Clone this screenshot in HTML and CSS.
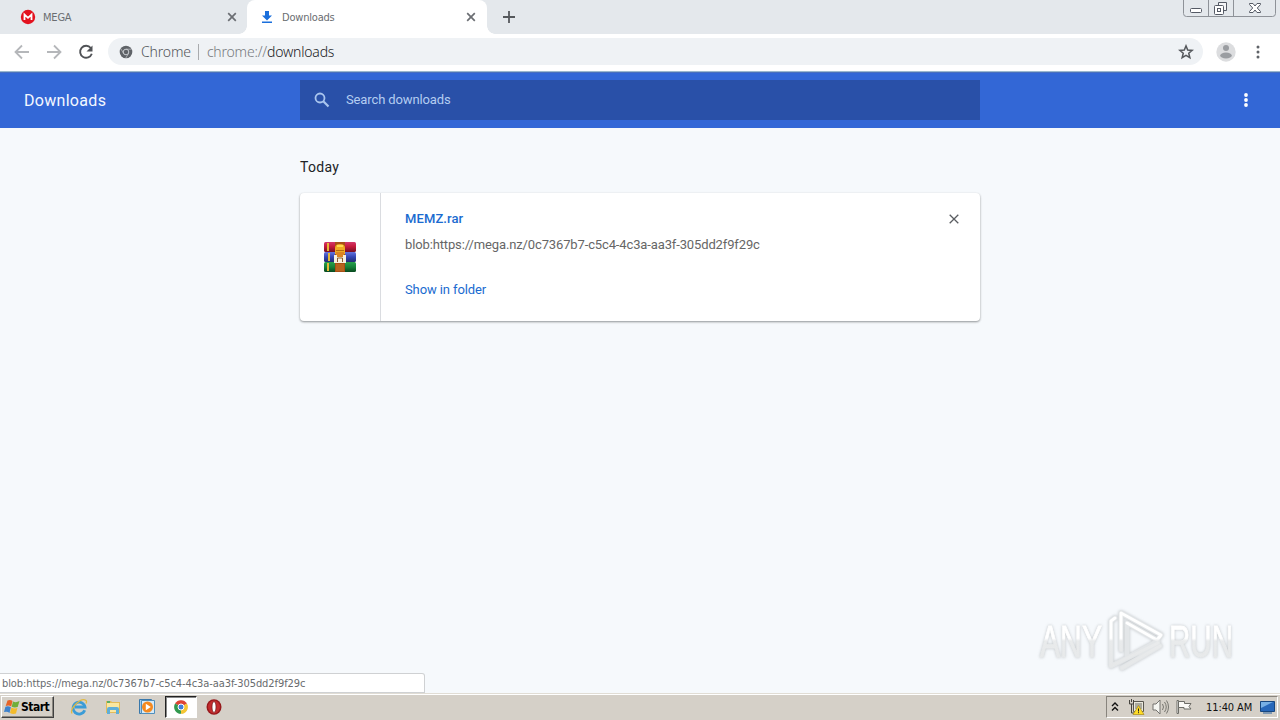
FILE: index.html
```html
<!DOCTYPE html>
<html lang="en">
<head>
<meta charset="utf-8">
<title>Downloads</title>
<link rel="stylesheet" href="styles.css">
</head>
<body>
<div class="screen">
  <div class="tabstrip">
    <div class="tab tab-mega">
      <svg class="favicon" viewBox="0 0 16 16" width="16" height="16"><circle cx="8" cy="8" r="7.2" fill="#e3121f"/><path d="M4.500 11V5.500L8 8.800l3.500-3.300V11" fill="none" stroke="#fff" stroke-width="1.8"/></svg>
      <span class="tab-title t-mega">MEGA</span>
      <svg class="tab-close" viewBox="0 0 10 10" width="10" height="10"><path d="M1.200 1.200l7.600 7.600M8.800 1.200L1.200 8.800" stroke="#6b6e73" stroke-width="1.700"/></svg>
    </div>
    <div class="tab tab-active">
      <svg class="favicon" viewBox="0 0 16 16" width="16" height="16"><path d="M6 2h4v4.500h3L8 11.500 3 6.500h3zM3 12.500h10v1.600H3z" fill="#1a6fdc"/></svg>
      <span class="tab-title t-down">Downloads</span>
      <svg class="tab-close" viewBox="0 0 10 10" width="10" height="10"><path d="M1.200 1.200l7.600 7.600M8.800 1.200L1.200 8.800" stroke="#6b6e73" stroke-width="1.700"/></svg>
    </div>
    <svg class="new-tab" viewBox="0 0 12 12" width="12" height="12"><path d="M6 0v12M0 6h12" stroke="#55585c" stroke-width="1.800"/></svg>
    <svg class="window-controls" viewBox="0 0 94 18" width="94" height="18">
      <path d="M.5 0v13.500q0 3 3 3h86q3 0 3-3V0M25.500 0v16M50.500 0v16" fill="none" stroke="#8e9298"/>
      <rect x="7.500" y="8.500" width="11" height="4" rx="1" fill="#fff" stroke="#555a65"/>
      <path d="M35.500 5V2.500h8v8H41" fill="#f4f5f7" stroke="#555a65"/>
      <rect x="31.500" y="5.500" width="9" height="9" rx="1" fill="#fff" stroke="#555a65"/><rect x="34.500" y="8.500" width="3" height="3" fill="#fff" stroke="#555a65"/>
      <path d="M66.500 3.500h3.500l2 2.500 2-2.500h3.500v1l-3.200 3.500 3.200 3.500v1H74L72 10l-2 2.500h-3.500v-1L69.700 8l-3.200-3.500z" fill="#fff" stroke="#555a65"/>
    </svg>
  </div>
  <div class="toolbar">
    <svg class="nav-icon back" viewBox="0 0 16 16" width="16" height="16"><path d="M15 8H2M8 1.500L1.500 8 8 14.500" fill="none" stroke="#b5b7ba" stroke-width="1.800"/></svg>
    <svg class="nav-icon forward" viewBox="0 0 16 16" width="16" height="16"><path d="M1 8h13M8 1.500L14.500 8 8 14.500" fill="none" stroke="#b5b7ba" stroke-width="1.800"/></svg>
    <svg class="nav-icon reload" viewBox="0 0 16 16" width="16" height="16"><path d="M12.800 4A6 6 0 1 0 13.800 9.800" fill="none" stroke="#505256" stroke-width="1.900"/><path d="M14.500 1.500V7.500H8.500z" fill="#505256"/></svg>
    <div class="omnibox">
      <svg class="site-icon" viewBox="0 0 14 14" width="14" height="14"><circle cx="7" cy="7" r="6.300" fill="#5f6368"/><circle cx="7" cy="7" r="2.800" fill="#5f6368" stroke="#d5d8dc" stroke-width=".9"/><path d="M7 4.200h5.500M4.600 8.500L1.900 3.800M9.500 8.500L6.800 13" stroke="#c5c8cc" stroke-width=".7"/></svg>
      <span class="site-name">Chrome</span>
      <span class="divider"></span>
      <span class="url"><span class="scheme">chrome://</span>downloads</span>
      <svg class="star" viewBox="0 0 16 16" width="16" height="16"><path d="M8 1.900l1.700 4.200 4.500.3-3.450 2.900 1.100 4.400L8 11.300l-3.850 2.400 1.100-4.400L1.800 6.400l4.500-.3z" fill="none" stroke="#55585c" stroke-width="1.500"/></svg>
    </div>
    <svg class="avatar" viewBox="0 0 20 20" width="20" height="20"><circle cx="10" cy="10" r="9.700" fill="#dcdddf"/><circle cx="10" cy="6" r="3" fill="#9a9da1"/><ellipse cx="10" cy="13.500" rx="5.800" ry="3" fill="#9a9da1"/></svg>
    <svg class="kebab" viewBox="0 0 4 14" width="4" height="14"><g fill="#5f6368"><circle cx="2" cy="2" r="1.500"/><circle cx="2" cy="7" r="1.500"/><circle cx="2" cy="12" r="1.500"/></g></svg>
  </div>
  <div class="page-header">
    <h1 class="heading">Downloads</h1>
    <div class="search">
      <svg class="search-icon" viewBox="0 0 16 16" width="16" height="16"><circle cx="6" cy="6" r="4.500" fill="none" stroke="#a9c5ee" stroke-width="1.800"/><path d="M9.300 9.300l5.200 5.200" stroke="#a9c5ee" stroke-width="2.200"/></svg>
      <span class="placeholder">Search downloads</span>
    </div>
    <svg class="page-menu" viewBox="0 0 4 14" width="4" height="14"><g fill="#fff"><circle cx="2" cy="2" r="1.900"/><circle cx="2" cy="7" r="1.900"/><circle cx="2" cy="12" r="1.900"/></g></svg>
  </div>
  <div class="content">
    <div class="list">
      <h2 class="date">Today</h2>
      <div class="card">
        <div class="file-icon">
          <svg viewBox="0 0 32 32" width="32" height="32">
            <defs>
              <linearGradient id="red" x2="0" y2="1"><stop stop-color="#d3386a"/><stop offset=".45" stop-color="#c51a3d"/><stop offset="1" stop-color="#760e23"/></linearGradient>
              <linearGradient id="blue" x2="0" y2="1"><stop stop-color="#6574de"/><stop offset=".5" stop-color="#3446b4"/><stop offset="1" stop-color="#222b70"/></linearGradient>
              <linearGradient id="green" x2="0" y2="1"><stop stop-color="#28a04d"/><stop offset=".5" stop-color="#168239"/><stop offset="1" stop-color="#08481e"/></linearGradient>
            </defs>
            <rect y="1" width="32" height="10" rx="1.500" fill="url(#red)"/><rect y="11" width="32" height="10" rx="1.500" fill="url(#blue)"/><rect y="21" width="32" height="10" rx="1.500" fill="url(#green)"/>
            <path d="M3 2h2v8H3zm1 10h2v8H4zm-1 10h2v8H3z" fill="#e5b936"/>
            <path d="M11 1h10v30H11z" fill="#a74f16"/><path d="M12 23h8v7h-8z" fill="#b7641f"/>
            <path d="M11 7q0-4 5-4t5 4v6H11z" fill="#efaa22"/><path d="M13 4h6v2h-6z" fill="#ffd94c"/><path d="M12 9.500h8" stroke="#b36b12"/><path d="M12 11h8v4h-8z" fill="#dc8422"/>
            <path d="M10 14h12v8H10z" fill="#f7f1df"/><path d="M13 13h6v3h-6z" fill="#dc8422"/><path d="M13.500 21v-4h5v4" fill="none" stroke="#8a5b2b"/>
          </svg>
        </div>
        <div class="details">
          <div class="title-row">
            <span class="file-name">MEMZ.rar</span>
            <svg class="remove" viewBox="0 0 10 10" width="10" height="10"><path d="M.7.700l8.600 8.600M9.300.700L.7 9.300" stroke="#5a5d61" stroke-width="1.300"/></svg>
          </div>
          <div class="file-url">blob:https://mega.nz/0c7367b7-c5c4-4c3a-aa3f-305dd2f9f29c</div>
          <div class="show">Show in folder</div>
        </div>
      </div>
    </div>
    <svg class="watermark" viewBox="0 0 204 70" width="204" height="70">
      <defs><linearGradient id="fade" gradientUnits="userSpaceOnUse" x1="0" y1="0" x2="0" y2="70"><stop offset=".46" stop-color="#fff"/><stop offset=".5" stop-color="#e9ebec"/><stop offset="1" stop-color="#e5e7e8"/></linearGradient></defs>
      <g class="mark-text" fill="url(#fade)" stroke="url(#fade)"><text x="5" y="51" textLength="62" lengthAdjust="spacingAndGlyphs">ANY</text><text x="134" y="51" textLength="64" lengthAdjust="spacingAndGlyphs">RUN</text></g>
      <g class="mark-play"><path class="mark-edge" d="M80 12l-4 3v45l47-23M86 44V7l40 22-4 5-30-17v35l31-17M87 62l38-22"/><path class="mark-line" d="M80 12l-4 3v45l47-23M86 44V7l40 22-4 5-30-17M87 62l38-22"/></g>
    </svg>
    <div class="status-bubble"><span class="status-text">blob:https://mega.nz/0c7367b7-c5c4-4c3a-aa3f-305dd2f9f29c</span></div>
  </div>
  <div class="taskbar">
    <div class="start">
      <svg viewBox="0 0 16 16" width="16" height="16"><path d="M3.500 1.500q3-1 5 .5L7.200 7.500Q5 6 1.700 7z" fill="#e66327"/><path d="M9 2.500q3 1.500 6.500-.5L13.700 8Q10.500 9 7.700 7.700z" fill="#6fae39"/><path d="M1.400 7.700q3-1 5.500.5L5.500 14Q3.500 12 0 13z" fill="#3e82cc"/><path d="M7.400 8.500q3 1.500 6 .5L12 14.500q-3 1-6-.500z" fill="#f3bb2b"/></svg>
      <span class="start-label">Start</span>
    </div>
    <div class="quick">
      <svg class="task-icon" viewBox="0 0 18 18" width="18" height="18"><path d="M14.700 12.300A6 6 0 1 1 15 9H5" fill="none" stroke="#3b9cd7" stroke-width="2.800"/><path d="M2 15.500C-.5 11 11-1.500 16 2.500q1 1 0 3" fill="none" stroke="#e0b943" stroke-width="1.300"/></svg>
      <svg class="task-icon" viewBox="0 0 18 18" width="18" height="18"><path d="M2 3h5l1 1h8v11H2z" fill="#e3bb59"/><path d="M3 5h12v9H3z" fill="#fae7a0"/><path d="M3 16v-5q0-2 2-2h8q2 0 2 2v5h-3v-4H6v4z" fill="#5faed8"/><path d="M3 3h3v2H3z" fill="#5cad65"/></svg>
      <svg class="task-icon" viewBox="0 0 18 18" width="18" height="18"><path d="M1.500 1.500h12v14h-12z" fill="#a6cae7" stroke="#3978ab"/><path d="M3.500 2.500h13v13h-13z" fill="#d6eaf8" stroke="#4f8fbd"/><circle cx="9.500" cy="9" r="5.500" fill="#f5891f"/><path d="M7.800 5.700l5 3.300-5 3.300z" fill="#fff"/></svg>
    </div>
    <div class="task-active">
      <svg viewBox="0 0 14 14" width="14" height="14"><circle cx="7" cy="7" r="6.800" fill="#ddd"/><path d="M7 7L1.100 3.600A6.800 6.800 0 0 1 12.900 3.600z" fill="#de4435"/><path d="M7 7l5.900-3.400A6.800 6.800 0 0 1 7 13.800z" fill="#f5c634"/><path d="M7 7v6.800A6.800 6.800 0 0 1 1.100 3.600z" fill="#31994e"/><circle cx="7" cy="7" r="3" fill="#3f7fdb" stroke="#fff"/></svg>
    </div>
    <svg class="opera" viewBox="0 0 16 16" width="16" height="16"><ellipse cx="8" cy="8" rx="7.500" ry="7.800" fill="#97191c"/><ellipse cx="8" cy="8" rx="6" ry="6.500" fill="#c32c2e"/><ellipse cx="8" cy="8" rx="2" ry="5.500" fill="#fff" stroke="#6b1517" stroke-width=".7"/></svg>
    <div class="tray">
      <svg class="chevrons" viewBox="0 0 8 10" width="8" height="10"><path d="M1 4l3-3 3 3M1 8.500l3-3 3 3" fill="none" stroke="#111" stroke-width="1.400"/></svg>
      <svg class="network" viewBox="0 0 17 16" width="17" height="16"><path d="M5.500 2.500h10v10h-10z" fill="#eae8dd" stroke="#59564f"/><path d="M7 4h7v6H7z" fill="#aaa99f"/><path d="M1.500 1v4h4V1M3.500 5v9H8M3.500 0v3" fill="none" stroke="#45433e"/><path d="M10.500 6.500l5.500 9H5z" fill="#ffdc27" stroke="#a68a1d" stroke-width=".7"/><path d="M10.500 9.500v3m0 .7v1" stroke="#222"/></svg>
      <svg class="speaker" viewBox="0 0 17 16" width="17" height="16"><path d="M1 5h3l4-4v14l-4-4H1z" fill="#f5f5f1" stroke="#74736f"/><path d="M10.500 5q2 3 0 6M12.500 3q3.500 5 0 10M14.500 1.500q4 6.500 0 13" fill="none" stroke="#777670"/></svg>
      <svg class="flag" viewBox="0 0 16 16" width="16" height="16"><path d="M1 1.500h1.500v13H1z" fill="#fff" stroke="#6d6c67"/><path d="M2.500 2.500h6v2H15l-2 3 2 2.500H8V8.500H2.500z" fill="#faf9f6" stroke="#6d6c67"/></svg>
      <span class="clock">11:40 AM</span>
      <svg class="desktop" viewBox="0 0 15 13" width="15" height="13"><path d="M.5.500h14v10H.5z" fill="#2868ba" stroke="#18477f"/><path d="M1 1h12Q7 4 1 7z" fill="#78b0e5"/><path d="M3 11.500h9v1H3z" fill="#2b629f"/></svg>
    </div>
  </div>
</div>
</body>
</html>
```
FILE: styles.css
```css
* { box-sizing: border-box; }
body { margin: 0; overflow: hidden; }
svg { display: block; flex: none; }
.screen { width: 1280px; height: 720px; display: flex; flex-direction: column; background: #f6f9fc; font-family: "DejaVu Sans Condensed", "DejaVu Sans", sans-serif; white-space: nowrap; }
.tabstrip { flex: none; height: 34px; display: flex; align-items: center; background: #e4e8ec; }
.tab { height: 34px; display: flex; align-items: center; color: #6a6d71; font-size: 11px; }
.tab-mega { width: 247px; padding: 0 10px 0 20px; }
.tab-active { width: 240px; padding: 0 11px 0 12px; background: #fff; border-radius: 8px 8px 0 0; position: relative; }
.tab-active::before, .tab-active::after { content: ""; position: absolute; bottom: 0; width: 8px; height: 8px; }
.tab-active::before { left: -8px; background: radial-gradient(circle at 0 0, transparent 7.5px, #fff 8px); }
.tab-active::after { right: -8px; background: radial-gradient(circle at 100% 0, transparent 7.5px, #fff 8px); }
.tab-title { margin-left: 7px; }
.t-mega { letter-spacing: -.2px; }
.t-down { letter-spacing: -.2px; }
.tab-close { margin-left: auto; }
.new-tab { margin-left: 16px; }
.window-controls { margin-left: auto; margin-right: 3px; align-self: flex-start; }
.toolbar { flex: none; height: 38px; display: flex; align-items: center; padding: 0 20px 2px 14px; background: #fff; border-bottom: 1px solid #9bb8ce; }
.forward, .reload { margin-left: 16px; }
.omnibox { width: 1095px; height: 27px; margin-left: 14px; padding: 0 9px 0 11px; display: flex; align-items: center; border-radius: 14px; background: #eff2f5; font-family: "Noto Sans", sans-serif; font-size: 14px; font-weight: 300; color: #202124; }
.site-name { margin-left: 8px; letter-spacing: -.15px; color: #53565a; }
.divider { width: 1px; height: 16px; margin: 0 8px 0 7px; background: #a9abae; }
.url { letter-spacing: -.2px; }
.scheme { color: #777a7e; }
.star { margin-left: auto; }
.avatar { margin-left: 13px; }
.kebab { margin-left: auto; }
.page-header { flex: none; height: 56px; display: grid; grid-template-columns: 276px 680px 1fr; align-items: center; padding: 0 32px 0 24px; background: #3367d6; box-shadow: inset 0 1px #4b70bd; font-family: Roboto, sans-serif; }
.heading { margin: 0; font-size: 16px; font-weight: 400; letter-spacing: .3px; color: #f3f8ff; }
.search { height: 40px; display: flex; align-items: center; padding-left: 14px; background: #2950a8; }
.placeholder { margin: 0 0 2px 16px; font-size: 13px; letter-spacing: -.12px; color: #b4cdf1; }
.page-menu { justify-self: end; }
.content { flex: 1; min-height: 0; position: relative; font-family: Roboto, sans-serif; }
.list { width: 680px; margin: 0 auto; padding-top: 30px; }
.date { margin: 0 0 16px; line-height: 19px; font-size: 14px; font-weight: 400; letter-spacing: .3px; color: #212326; }
.card { height: 128px; display: flex; border-radius: 4px; background: #fff; box-shadow: 0 1px 2px rgba(60,64,67,.45), 0 1px 2px 1px rgba(60,64,67,.08); }
.file-icon { width: 81px; border-right: 1px solid #dadce0; display: flex; align-items: center; justify-content: center; }
.details { flex: 1; padding: 16px 21px 0 24px; font-size: 13px; line-height: 20px; }
.title-row { display: flex; align-items: center; justify-content: space-between; }
.file-name { font-weight: 500; letter-spacing: .1px; color: #1a6bd0; }
.file-url { margin-top: 6px; color: #666; letter-spacing: -.13px; }
.show { margin-top: 25px; color: #1a6bd0; letter-spacing: -.1px; }
.watermark { position: absolute; left: 1035px; top: 478px; overflow: visible; filter: drop-shadow(0 0 1.500px rgba(95,100,104,.35)); }
.mark-text { font: 400 45px "Liberation Sans", sans-serif; stroke-width: .8px; }
.mark-play path { fill: none; stroke-linejoin: round; stroke-linecap: round; }
.mark-edge { stroke: #e3e6e8; stroke-width: 5px; }
.mark-line { stroke: url(#fade); stroke-width: 3px; }
.status-bubble { position: absolute; left: 0; bottom: 0; width: 425px; height: 20px; padding: 0 2px; display: flex; align-items: center; background: #fff; border: 1px solid #cfd1d3; border-left: 0; border-radius: 0 3px 0 0; font: 11px "DejaVu Sans Condensed", sans-serif; color: #686b6e; }
.status-text { letter-spacing: -.08px; }
.taskbar { flex: none; height: 27px; display: flex; align-items: center; padding: 2px 2px 1px 1px; background: #d5d0c8; box-shadow: inset 0 1px #e1ddd5, inset 0 2px #fff; }
.start { width: 53px; height: 22px; padding-left: 2px; display: flex; align-items: center; border: 1px solid; border-color: #fff #404040 #404040 #fff; box-shadow: inset -1px -1px #8b8780; }
.start-label { margin-left: 1px; font-size: 12px; font-weight: 700; letter-spacing: -.5px; color: #000; }
.quick { margin-left: 16px; display: flex; gap: 16px; }
.task-active { width: 32px; height: 22px; margin-left: 9px; display: flex; align-items: center; justify-content: center; background: #fff; border: 1px solid; border-color: #222 #fff #fff #222; box-shadow: inset 1px 1px #888; }
.opera { margin-left: 9px; }
.tray { width: 172px; height: 22px; margin-left: auto; display: flex; align-items: center; padding: 0 2px 0 5px; border: 1px solid; border-color: #88847d #fff #fff #88847d; }
.chevrons { margin-left: -1px; }
.network { margin-left: 9px; }
.speaker { margin-left: 7px; }
.flag { margin-left: 7px; }
.clock { margin-left: 14px; font-size: 11px; letter-spacing: -.1px; color: #111; }
.desktop { margin-left: auto; }
```
